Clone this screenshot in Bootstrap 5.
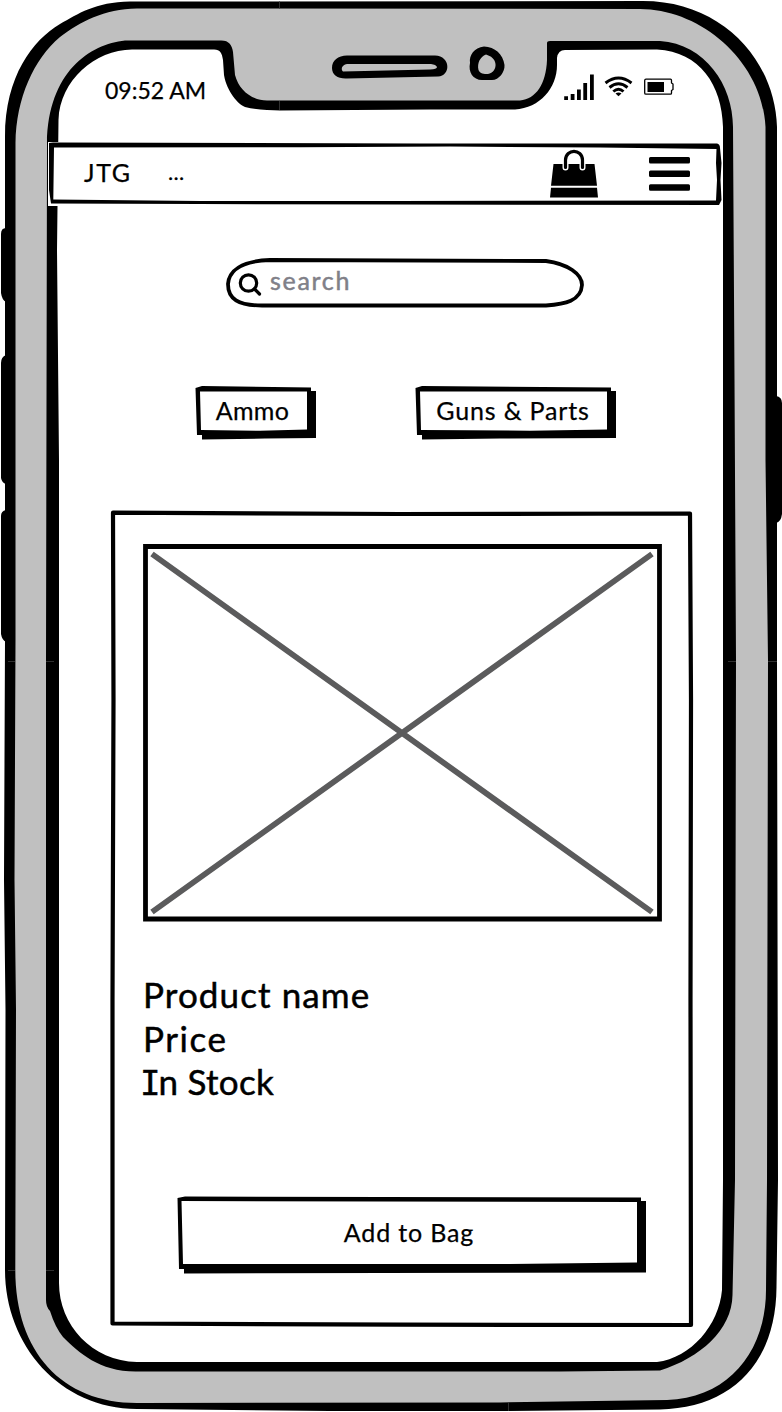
<!DOCTYPE html>
<html lang="en">
<head>
<meta charset="utf-8">
<meta name="viewport" content="width=device-width, initial-scale=1">
<title>JTG</title>
<link href="https://cdn.jsdelivr.net/npm/bootstrap@5.3.0/dist/css/bootstrap.min.css" rel="stylesheet">
<style>
body{margin:0;background:#fff;color:#000;font-family:Lato,"Open Sans",sans-serif;font-size:25px;line-height:30px;overflow:hidden;-webkit-text-stroke:.25px currentColor}
.phone{width:782px;height:1412px}
.sketch{left:0;top:0;width:100%;height:100%;overflow:visible;pointer-events:none}
.screen{z-index:1;padding:0 60px 0 48px}
.statusbar{height:142px;padding:76px 48px 0 57px;font-size:23px;line-height:28px}
.clock{letter-spacing:0}
.status-icons{margin-top:-3px}
.topbar{height:64px;padding:0 31px 0 36px;background:#fff}
.brandname{letter-spacing:1.6px;width:84px;padding-bottom:4px}
.dots{font-size:22px;padding-bottom:4px;letter-spacing:.3px}
.menu-icon{margin-left:50px}
.searchbox{width:358px;height:50px;margin:52px 0 0 178px;padding:0 20px 6px 12px}
.searchbox input{border:0;background:none;outline:0;padding:0;color:#808088;font:inherit;letter-spacing:1.7px;width:200px;height:30px;margin-left:8px;-webkit-text-stroke:.5px #808088}
.searchbox input::placeholder{color:#808088;opacity:1}
.cats{margin:78px 0 0 147px;gap:100px}
.skbtn{border:0;background:none;color:#000;padding:0 5px 6px 0;height:54px;line-height:30px}
.b1{width:120px;letter-spacing:.3px}
.b2{width:200px;letter-spacing:.85px;padding-right:4px}
.product{width:582px;height:816px;margin:72px 0 0 62px;padding:32px 28px 0 33px}
.photo{width:519px;height:378px}
.info{margin-top:51px;font-size:35px;line-height:43.5px;-webkit-text-stroke-width:.5px}
.l1{letter-spacing:1.1px}
.l2{letter-spacing:1.6px}
.l3{letter-spacing:.3px}
.info .cap{font-family:"DejaVu Sans Mono",monospace;font-size:34px;line-height:0;letter-spacing:-2px;margin-left:-3px}
.add{width:468px;height:78px;margin:92.500px 0 0 35px;padding:0 6px 6px 0;letter-spacing:.85px}
</style>
</head>
<body>
<div class="phone position-relative">
  <svg class="sketch position-absolute" viewBox="0 0 782 1412" aria-hidden="true">
    <path d="M6 228Q1 228 1 234V293Q2 300 6 302ZM6 355Q1 357 1 363V478Q2 483 6 484ZM6 510Q1 511 1 516V634Q2 640 6 642ZM776 396Q782 397 782 403V514Q781 522 776 523Z"/>
    <path d="M130 1.500C95 2 78 14 60 24C33 40 5 76 5 137V640L4 880L5.500 1010L5 1270C5 1345 60 1409 137 1409L330 1411L500 1411L660 1409.500C730 1408 776 1365 776.500 1287L778 1180L777 660V127C775 60 722 1 643 1Z"/>
    <path fill="#c0c0c0" d="M137 8.500C104 9 80 22 60 37C34 59 16 98 15.500 143V640L14.500 880L16 1010L15.300 1270C15.300 1352 62 1403 137 1403L500 1402.500L560 1401.500L667 1400C730 1398 766 1350 766 1290L767 1180L768 660L765.500 460V127C762 60 700 9 640 9Z"/>
    <path d="M125 40.500H220C229 40 232 45 233 52L235 75C239 90 251 100 267 100.500H520C536 99 546 84 547 60V43Q547 41 550 41H660C705 44 733 85 733 127L734.500 380L736 660L735 1180L732.500 1295C732 1330 700 1358 660 1370.500L560 1371.500H137C100 1372 79 1353 63 1337Q55 1327 50 1311Q46 1307 46 1300V660L47 143C48 72 90 44 125 40.500Z"/>
    <path fill="#fff" d="M132 49.500H213C220 49 222 53 223 60L224 75C227 92 238 104 245 107C256 110 268 110 280 110.500L430 109.500H515C540 108 557 88 557 65V58Q558 50 565 50L657 49.500C700 52 722 85 723 127V1180L722 1290C719 1325 691 1358 657 1362H137C92 1361 59 1325 59 1283V460L57 250L58.500 120C60 80 95 50 132 49.500Z"/>
    <path fill-rule="evenodd" d="M347 55.500H435C451 56 451 76 438 76.500L347 78.500C338 79 332 75 332 68C332 60 338 56 347 55.500ZM347 64C341 65 341 70 343 71.500L430 69.500Q437 69 437 67Q436 64.500 431 64Z"/>
    <path fill-rule="evenodd" d="M484 46.500C474 48 469 55 470 63C468 72 473 80 482 80H492C499 80 505 72 504.500 65C503 54 495 47 484 46.500ZM486 54.500C480 57 477 63 478.500 70C480 74 484 74 488 74C493 73 496 69 495.500 64C495 59 491 56 486 54.500Z"/>
    <path d="M279.500 1V9M279.500 101V110M8 661.500H15M46 661.500H54M736 661.500H728M768 661.500H777M8 1270.500H15M46 1270.500H54M508.500 1403V1411" stroke="#444" stroke-width=".7"/>
  </svg>

  <div class="screen position-relative d-flex flex-column">
    <header class="statusbar d-flex">
      <span class="clock">09:52 AM</span>
      <svg class="status-icons ms-auto" width="112" height="28" viewBox="562 73 112 28" aria-label="Signal, wifi, battery">
        <path d="M564.200 96.200h3.800v3.800h-3.800zM570.700 94h3.800v6h-3.800zM577 89.500h3.800V100H577zM583.300 83h3.800v17h-3.800zM590 74.500h3.800V100H590z"/>
        <g fill="none" stroke="#000" stroke-width="2.900"><path d="M605.500 83Q618.500 73 631.500 83M609.500 87.500Q618.500 80.200 627.500 87.500M613.300 91.500Q618.500 87 623.500 91.500"/></g>
        <path d="M615.500 93.500Q618.500 91.500 621.500 93.500L618.500 96.300Z"/>
        <path fill="none" stroke="#000" stroke-width="1.300" d="M646 79.200H670.500Q671.500 79.200 671.500 80.500V83L673 84V89.500L671.500 90.500V93Q671.500 94.200 670.500 94.200H646Q644.700 94.200 644.700 93V80.500Q644.700 79.200 646 79.200Z"/>
        <path d="M647.500 82H664V92H647.500z"/>
      </svg>
    </header>

    <nav class="topbar position-relative d-flex align-items-center">
      <svg class="sketch position-absolute" viewBox="48 142 674 64" aria-hidden="true">
        <path fill-rule="evenodd" d="M49 143L53 142.500L420 143.500L717 143.500Q720 144 720 148L721.500 163L720.500 180L721.500 200L719 205L400 204.500L200 204L51 203.500L49 190ZM54 147.500L53.300 199.500L200 201L400 201L716 200.500L717 180L716 163L716.500 149L600 147.500L450 146.500L300 147.300Z"/>
      </svg>
      <span class="brandname">JTG</span>
      <span class="dots">...</span>
      <svg class="ms-auto" width="50" height="50" viewBox="549 149 50 50" aria-label="Bag">
        <path d="M553.500 164H594.500L597 185.800H551ZM551 187.700H597L598 197.500H550Z"/>
        <path fill="none" stroke="#fff" stroke-width="6" stroke-linecap="round" d="M565.500 167.500V160M582.500 167.500V160"/>
        <path fill="none" stroke="#000" stroke-width="3.200" stroke-linecap="round" d="M565.500 167.500V160C566 148.500 582 148.500 582.500 160V167.500"/>
      </svg>
      <svg class="menu-icon" width="42" height="36" viewBox="649 156 42 36" aria-label="Menu">
        <path d="M650.500 157H688.500Q690 157 690 158.500V162Q690 163.500 688.500 163.500H650.500Q649 163.500 649 162V158.500Q649 157 650.500 157ZM650.500 170.500H688.500Q690 170.500 690 172V175.500Q690 177 688.500 177H650.500Q649 177 649 175.500V172Q649 170.500 650.500 170.500ZM650.500 184.300H688.500Q690 184.300 690 185.800V189.300Q690 190.800 688.500 190.800H650.500Q649 190.800 649 189.300V185.800Q649 184.300 650.500 184.300Z"/>
      </svg>
    </nav>

    <form class="searchbox position-relative d-flex align-items-center">
      <svg class="sketch position-absolute" viewBox="226 258 358 50" aria-hidden="true">
        <path fill="none" stroke="#000" stroke-width="3.800" d="M270 260L546 261C568 264 582 274 582 285C581 301 565 304 546 305.500H262C238 305.500 228 299 228 284C229 271 241 261 270 260Z"/>
      </svg>
      <svg width="24" height="24" viewBox="237 272 24 24" class="mt-2" aria-hidden="true">
        <g fill="none" stroke="#000" stroke-width="3.200" stroke-linecap="round"><circle cx="247.500" cy="283" r="8.200"/><path d="M253.500 289L258.500 294"/></g>
      </svg>
      <input type="text" placeholder="search" aria-label="search">
    </form>

    <div class="cats d-flex">
      <button class="skbtn b1 position-relative" type="button">
        <svg class="sketch position-absolute" viewBox="195 386 120 54" aria-hidden="true">
          <path fill-rule="evenodd" d="M195.500 388L202 386L311 387.500V391H316V438L265 438.500L202 439.500V435H197ZM200 391.500L201 430L260 430.700L307 429.500V391.500Z"/>
        </svg><span>Ammo</span>
      </button>
      <button class="skbtn b2 position-relative" type="button">
        <svg class="sketch position-absolute" viewBox="415 386 200 54" aria-hidden="true">
          <path fill-rule="evenodd" d="M415.500 388L422 386L611 387.500V391H616V438L500 438.500L422 439.500V435H417ZM420 391.500L421 430L530 430.700L607 429.500V391.500Z"/>
        </svg><span>Guns &amp; Parts</span>
      </button>
    </div>

    <section class="product position-relative">
      <svg class="sketch position-absolute" viewBox="110 512 582 816" aria-hidden="true">
        <path fill="none" stroke="#000" stroke-width="4.200" stroke-linejoin="round" d="M113 512.700L400 514L690 513.500L691 700L690.500 1000L691 1325L400 1324.700L112.500 1323.500L112.500 1000L113.500 700Z"/>
      </svg>
      <svg class="photo d-block" viewBox="143 544 519 378" role="img" aria-label="Product image">
        <path fill="none" stroke="#5b5b5c" stroke-width="5.800" d="M152 554L652 912M652 554L152 912"/>
        <path fill="none" stroke="#000" stroke-width="4.800" d="M145.500 546.500H659.500V919H145.500Z"/>
      </svg>
      <div class="info">
        <div class="l1">Product name</div>
        <div class="l2">Price</div>
        <div class="l3"><span class="cap">I</span>n Stock</div>
      </div>
      <button class="skbtn add position-relative" type="button">
        <svg class="sketch position-absolute" viewBox="178 1196 468 78" aria-hidden="true">
          <path fill-rule="evenodd" d="M177.500 1198L185 1196.500L641 1197.500V1201H646V1272.500L184 1273.500V1269H179ZM181.500 1201L183 1264L510 1264L637 1262.500V1202Z"/>
        </svg><span>Add to Bag</span>
      </button>
    </section>
  </div>
</div>
<script src="https://cdn.jsdelivr.net/npm/bootstrap@5.3.0/dist/js/bootstrap.bundle.min.js"></script>
</body>
</html>
